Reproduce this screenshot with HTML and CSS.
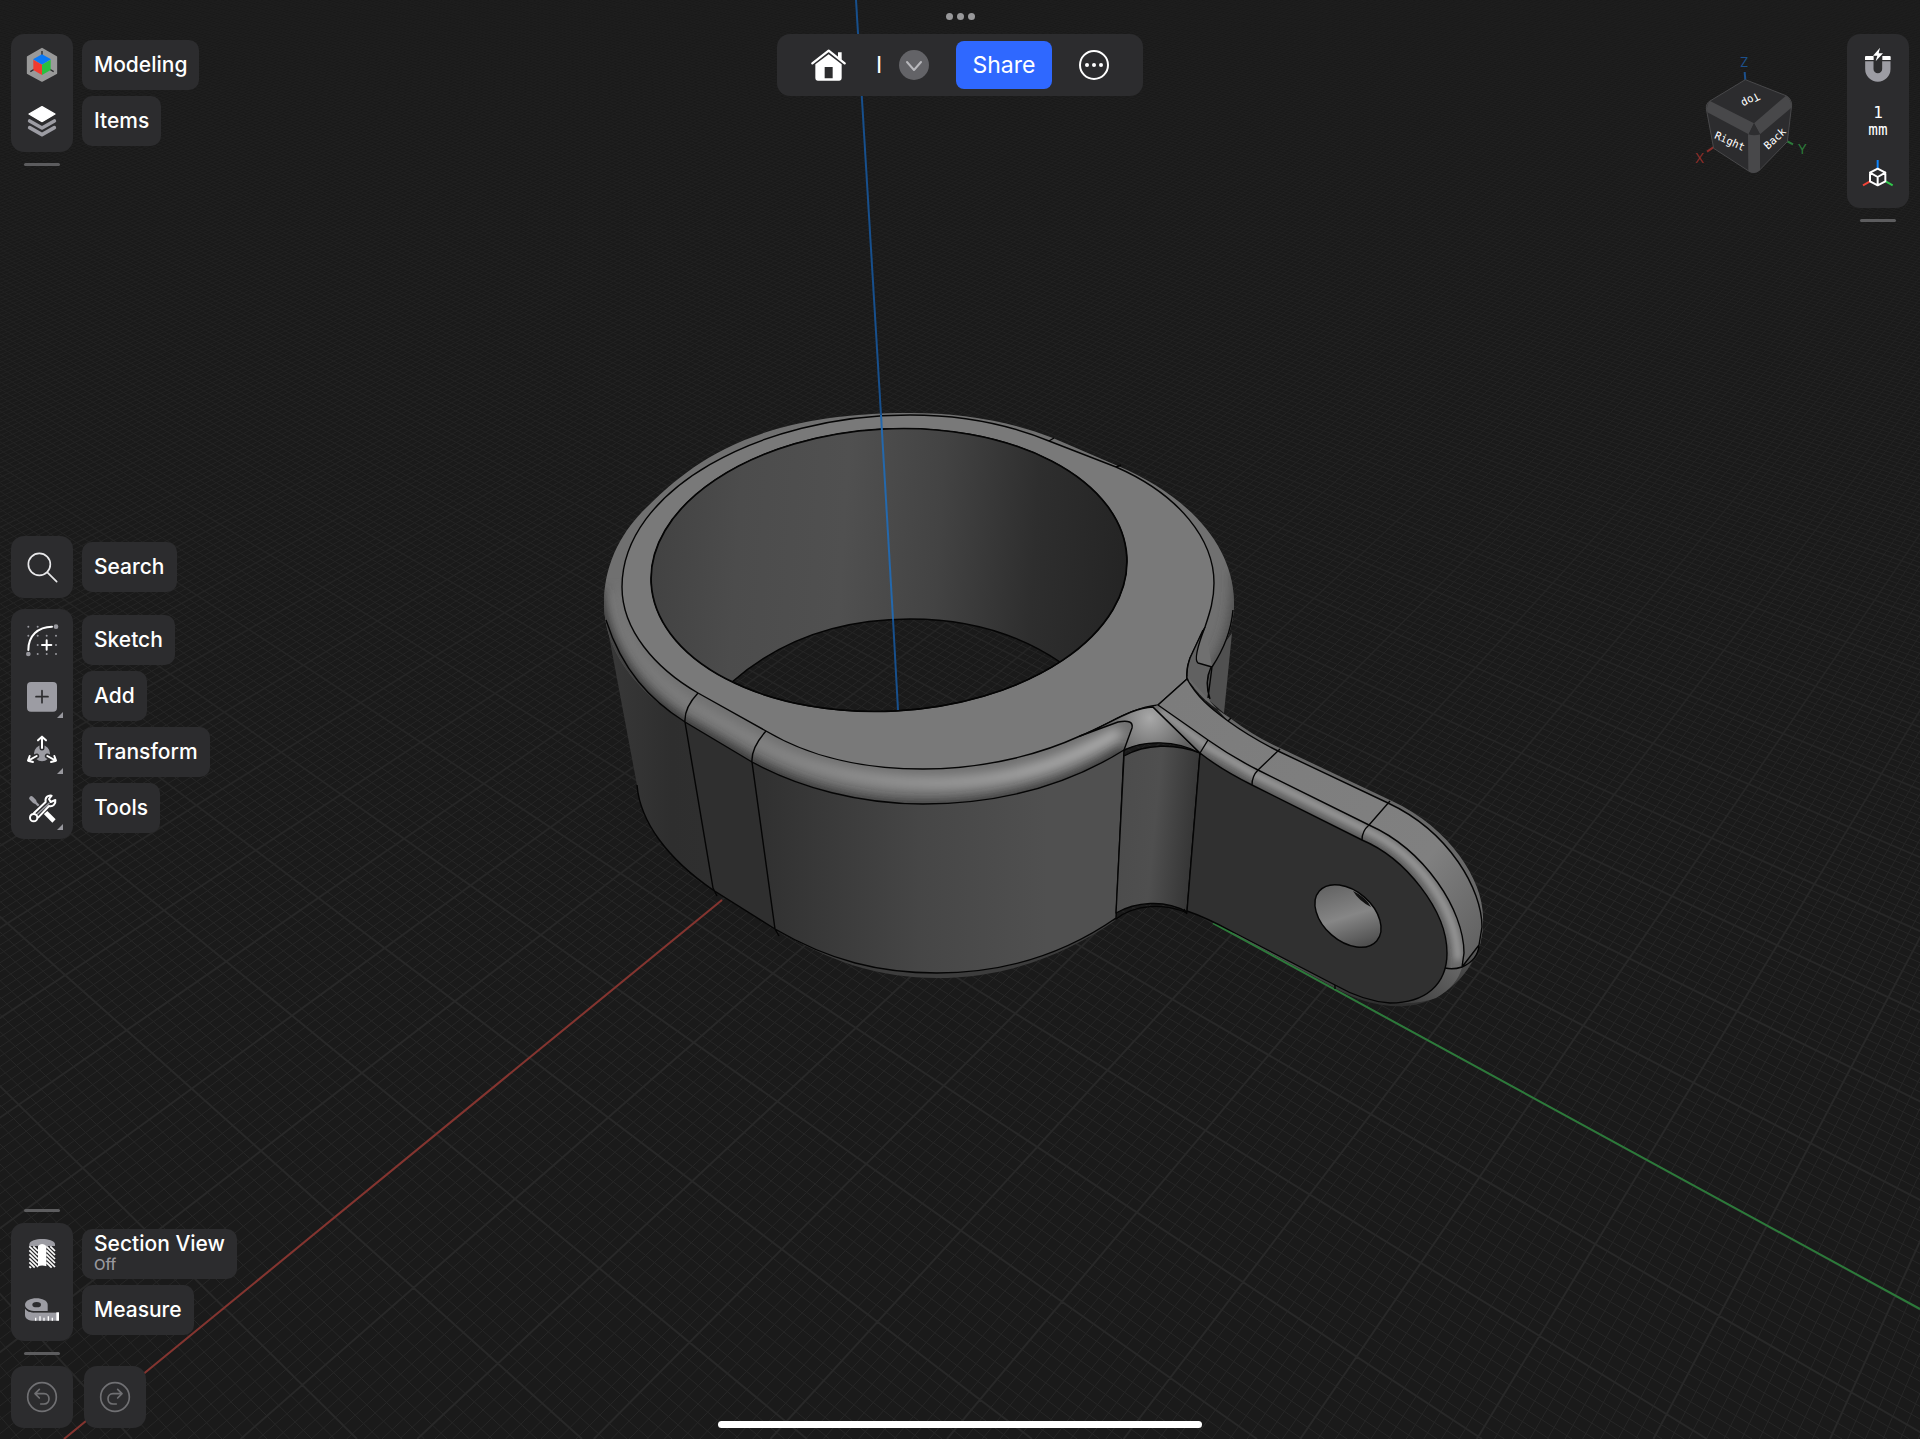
FILE: index.html
```html
<!DOCTYPE html>
<html lang="en">
<head>
  <meta charset="UTF-8" />
  <meta name="viewport" content="width=device-width, initial-scale=1.0" />
  <title>Modeling</title>
  <link rel="stylesheet" href="styles.css">
</head>
<body>
  <div class="app">

    <!-- 3D viewport -->
    <svg class="scene" viewBox="0 0 1920 1439" preserveAspectRatio="xMidYMid slice" aria-hidden="true">
      <defs>
        <linearGradient id="wallIn" x1="650" x2="1128" y1="560" y2="590" gradientUnits="userSpaceOnUse">
          <stop offset="0" stop-color="#424242"/><stop offset=".18" stop-color="#4c4c4c"/><stop offset=".4" stop-color="#505050"/>
          <stop offset=".6" stop-color="#434343"/><stop offset=".8" stop-color="#2e2e2e"/><stop offset="1" stop-color="#242424"/>
        </linearGradient>
        <linearGradient id="wallOut" x1="610" x2="1124" y1="0" y2="0" gradientUnits="userSpaceOnUse">
          <stop offset="0" stop-color="#383838"/><stop offset=".12" stop-color="#2e2e2e"/><stop offset=".3" stop-color="#313131"/>
          <stop offset=".6" stop-color="#464646"/><stop offset=".85" stop-color="#505050"/><stop offset="1" stop-color="#505050"/>
        </linearGradient>
        <linearGradient id="concave" x1="1118" x2="1200" y1="820" y2="828" gradientUnits="userSpaceOnUse">
          <stop offset="0" stop-color="#4c4c4c"/><stop offset=".45" stop-color="#4f4f4f"/><stop offset="1" stop-color="#323232"/>
        </linearGradient>
        <linearGradient id="armTop" x1="1170" x2="1483" y1="700" y2="950" gradientUnits="userSpaceOnUse">
          <stop offset="0" stop-color="#7c7c7c"/><stop offset=".75" stop-color="#808080"/><stop offset="1" stop-color="#606060"/>
        </linearGradient>
        <linearGradient id="armBack" x1="0" x2="0" y1="930" y2="1005" gradientUnits="userSpaceOnUse">
          <stop offset="0" stop-color="#686868"/><stop offset="1" stop-color="#2e2e2e"/>
        </linearGradient>
        <linearGradient id="armLip" x1="1450" x2="1390" y1="950" y2="1010" gradientUnits="userSpaceOnUse">
          <stop offset="0" stop-color="#6a6a6a"/><stop offset="1" stop-color="#343434"/>
        </linearGradient>
        <linearGradient id="bore" x1="1315" x2="1380" y1="890" y2="930" gradientUnits="userSpaceOnUse">
          <stop offset="0" stop-color="#5c5c5c"/><stop offset=".55" stop-color="#868686"/><stop offset="1" stop-color="#4c4c4c"/>
        </linearGradient>
        <linearGradient id="shine" x1="640" x2="1100" y1="0" y2="0" gradientUnits="userSpaceOnUse">
          <stop offset="0" stop-color="#7c7c7c"/><stop offset=".3" stop-color="#8a8a8a"/><stop offset="1" stop-color="#bcbcbc"/>
        </linearGradient>
        <radialGradient id="blend" cx="1150" cy="718" r="45" gradientUnits="userSpaceOnUse">
          <stop offset="0" stop-color="#a8a8a8"/><stop offset="1" stop-color="#606060"/>
        </radialGradient>
        <filter id="soft" x="-20%" y="-20%" width="140%" height="140%"><feGaussianBlur stdDeviation="6"/></filter>
        <filter id="softer" x="-20%" y="-40%" width="140%" height="180%"><feGaussianBlur stdDeviation="3"/></filter>
        <linearGradient id="fadeMajor" x1="0" x2="0" y1="350" y2="1000" gradientUnits="userSpaceOnUse">
          <stop offset="0" stop-color="#fff" stop-opacity="0"/><stop offset="1" stop-color="#fff"/>
        </linearGradient>
        <linearGradient id="fadeMinor" x1="0" x2="0" y1="0" y2="900" gradientUnits="userSpaceOnUse">
          <stop offset="0" stop-color="#fff" stop-opacity=".3"/><stop offset=".5" stop-color="#fff" stop-opacity=".7"/><stop offset="1" stop-color="#fff"/>
        </linearGradient>
        <mask id="majorMask" maskUnits="userSpaceOnUse" x="0" y="0" width="1920" height="1439"><rect width="1920" height="1439" fill="url(#fadeMajor)"/></mask>
        <mask id="minorMask" maskUnits="userSpaceOnUse" x="0" y="0" width="1920" height="1439"><rect width="1920" height="1439" fill="url(#fadeMinor)"/></mask>
        <clipPath id="holeClip"><ellipse cx="889" cy="570" rx="238" ry="141" transform="rotate(-3.2 889 570)"/></clipPath>
        <clipPath id="bandClip"><path d="M604 603C604 560 625 528 647 507C690 465 750 413 910 413C960 413 1010 421 1053 438C1080 450 1100 459 1118 466C1180 492 1234 540 1234 603C1234 630 1222 652 1212 667L1205 627C1212 610 1214 600 1214 583C1213 540 1180 498 1116 467L1049 441C1010 425 965 415 910 415C760 415 622 490 622 587C622 630 655 668 698 693L766 731C810 757 860 769 923 769C990 769 1045 752 1080 736L1118 722Q1134 719 1132 728L1124 750C1090 772 1020 804 923 804C860 804 800 788 752 762L685 722C650 700 604 660 604 603Z"/></clipPath>
        <clipPath id="armClip"><path d="M1153 707L1158 705L1208 740C1225 752 1240 761 1258 770L1369 825C1425 850 1464 910 1464 953L1462 967C1455 969 1449 969 1445 968L1447 953C1445 910 1405 858 1362 840L1252 785C1232 775 1215 765 1200 753Z"/></clipPath>
      </defs>

      <g mask="url(#minorMask)"><path class="grid-minor" id="gridMinor"/></g>
      <g mask="url(#majorMask)"><path class="grid-major" id="gridMajor"/></g>
      <path class="axis-x" d="M722 900L64 1439"/>
      <path class="axis-y" d="M1213 923L1920 1309"/>

      <!-- ring walls -->
      <path fill="#505050" d="M1232 633L1224 713L1205 697L1212 660Z"/>
      <path fill="#3c3c3c" d="M775 929C830 962 880 978 937 978C1010 978 1070 952 1116 920L1070 930L937 960Z"/>
      <path fill="url(#wallOut)" d="M606 620L637 785C640 822 668 859 713 890L775 929C830 961 880 973 937 973C1010 973 1070 950 1116 918L1124 750C1060 790 990 804 923 804C860 804 800 788 752 762L685 722C650 700 622 670 606 620"/>
      <path fill="#2f2f2f" d="M685 722L752 762L775 929L713 890Z"/>
      <path class="edge" d="M637 785C640 822 668 859 713 890L775 929C830 961 880 973 937 973C1010 973 1070 950 1116 918M685 722L713 888L717 896M752 762L775 929L779 936M1124 750L1116 918"/>

      <!-- top rounding -->
      <path fill="#707070" fill-rule="evenodd" d="M604 603C604 560 625 528 647 507C690 465 750 413 910 413C960 413 1010 421 1053 438L1118 466C1180 492 1234 540 1234 603C1234 630 1222 652 1212 667L1187 679L1124 750C1090 772 1020 804 923 804C860 804 800 788 752 762L685 722C650 700 604 660 604 603ZM1127 557A238 141 -3.2 0 0 651 583A238 141 -3.2 0 0 1127 557Z"/>
      <g clip-path="url(#bandClip)">
        <path class="shade-dark" d="M600 590C606 665 650 702 685 724L752 764C800 790 860 808 923 808C1020 808 1090 776 1126 750"/>
        <path class="shade-light" d="M612 590C616 640 655 680 692 706L760 743C810 772 880 784 940 783C1020 781 1070 760 1120 732"/>
        <path class="shade-right" d="M1238 570C1240 620 1228 650 1208 680"/>
      </g>

      <!-- top face -->
      <path class="edge" fill="#797979" fill-rule="evenodd" d="M622 587C622 490 760 415 910 415C965 415 1010 425 1049 441L1116 467C1180 495 1214 540 1214 583C1214 600 1210 612 1205 627L1190 658Q1186 668 1187 679L1158 705C1130 708 1110 724 1080 736C1045 752 990 769 923 769C860 769 810 757 766 731L698 693C655 668 622 630 622 587ZM1127 557A238 141 -3.2 0 0 651 583A238 141 -3.2 0 0 1127 557Z"/>
      <g clip-path="url(#holeClip)">
        <path class="edge" fill="url(#wallIn)" d="M732 682C780 640 840 619 910 619C970 619 1020 635 1060 662L1160 662V400H640V682Z"/>
      </g>
      <ellipse class="edge" cx="889" cy="570" rx="238" ry="141" transform="rotate(-3.2 889 570)"/>
      <path class="edge" d="M606 620C622 670 650 700 685 722L752 762C800 788 860 804 923 804C990 804 1060 790 1124 750M698 693Q684 708 685 722M766 731Q751 748 752 762M1049 441L1054 438M1116 467L1121 465"/>

      <!-- blend next to the arm, right side -->
      <path fill="#616161" d="M1203 630L1190 658Q1186 670 1189 682L1210 702L1207 680L1211 667L1198 664Q1194 658 1203 630Z"/>
      <path class="edge" d="M1205 627C1198 645 1194 660 1198 663L1212 667C1222 652 1231 632 1233 610M1203 630L1190 658Q1186 670 1187 679M1211 667Q1204 682 1210 699M1212 667L1208 698"/>

      <!-- concave wall and blend -->
      <path fill="url(#concave)" class="edge" d="M1124 756C1145 744 1175 743 1200 753L1187 912C1165 899 1135 902 1116 913Z"/>
      <path class="edge" d="M1116 919C1135 904 1165 903 1187 913"/>
      <path fill="url(#blend)" class="edge" d="M1080 736C1110 724 1130 708 1153 707L1200 753C1175 740 1145 740 1124 750L1132 728Q1134 719 1118 722Z"/>

      <!-- arm -->
      <path fill="url(#armBack)" d="M1187 676C1196 695 1212 706 1230 718Q1255 737 1280 748L1392 801C1450 828 1483 880 1483 917Q1484 943 1473 960C1460 986 1432 1005 1405 1006Q1370 1008 1335 988L1233 933L1445 960Z"/>
      <path fill="url(#armTop)" d="M1187 679C1197 697 1210 708 1228 721Q1250 737 1278 751L1388 803C1450 832 1482 890 1482 927L1480 945L1462 967L1464 953C1464 910 1425 850 1369 825L1258 770C1240 761 1225 752 1208 740L1158 705Z"/>
      <g clip-path="url(#armClip)">
        <path fill="#6a6a6a" d="M1150 690H1490V1000H1150Z"/>
        <path class="arm-light" d="M1160 710L1208 747L1258 776L1366 830C1422 856 1458 912 1458 960"/>
        <path class="arm-dark" d="M1198 758L1252 789L1362 844C1403 862 1443 910 1444 970"/>
      </g>
      <path fill="url(#armLip)" d="M1445 968Q1453 970 1462 967Q1458 985 1436 998Q1400 1012 1335 988L1363 997Q1430 1014 1445 968Z"/>
      <path fill="#303030" class="edge" d="M1200 753C1215 765 1232 775 1252 785L1362 840C1405 858 1447 910 1447 953C1447 985 1425 1003 1390 1003Q1363 1001 1335 985L1233 932Q1205 917 1187 911Z"/>
      <path class="edge" d="M1187 679L1158 705L1208 740C1225 752 1240 761 1258 770L1369 825C1425 850 1464 910 1464 953L1462 967L1479 945M1187 679C1197 697 1210 708 1228 721Q1250 737 1278 751L1388 803C1450 832 1482 890 1482 927L1479 945Q1478 960 1462 967Q1453 970 1445 968M1280 749L1258 770Q1252 776 1252 785M1390 801L1369 825Q1362 831 1362 840M1208 740L1200 753L1153 707M1228 721L1231 718M1184 909L1187 914M1335 985V989"/>
      <ellipse class="edge" fill="url(#bore)" cx="1348" cy="916" rx="38" ry="25" transform="rotate(41 1348 916)"/>
      <path fill="#111" d="M1353 891Q1366 897 1371 907Q1359 901 1353 891Z"/>

      <path class="axis-z" d="M856 0L881 415"/>
      <path class="axis-z axis-z-over" d="M881 415L893 619"/>
      <path class="axis-z" d="M893 619L898 710"/>
    </svg>

    <main class="ui">
      <aside class="side side-left">
        <div class="stack">
          <section class="group">
            <div class="panel">
              <button class="tool" aria-labelledby="l-modeling">
                <svg viewBox="0 0 108 108"><path fill="#999" stroke="#999" stroke-width="5" stroke-linejoin="round" d="M54 5L97 30V79L54 102L11 79V30Z"/><path stroke="#2c2c2e" stroke-width="4" d="M54 12V26M19 74L32 66M89 74L76 66"/><path fill="#0a78f5" d="M54 22L81 37L54 53L27 37Z"/><path fill="#f03b30" d="M28 38L54 53V84L28 69Z"/><path fill="#28c03f" d="M80 38L54 53V84L80 69Z"/></svg>
              </button>
              <button class="tool" aria-labelledby="l-items">
                <svg viewBox="0 0 108 108"><path fill="#fff" stroke="#fff" stroke-width="4" stroke-linejoin="round" d="M54 11L93 33L54 56L15 33Z"/><path class="layer" d="M17 54L54 75L91 54M17 74L54 95L91 74"/><path fill="none" stroke="#2c2c2e" stroke-width="4" d="M10 38L54 62L98 38"/></svg>
              </button>
            </div>
            <div class="labels">
              <span class="label" id="l-modeling">Modeling</span>
              <span class="label" id="l-items">Items</span>
            </div>
          </section>
          <div class="handle"></div>
        </div>

        <div class="stack">
          <section class="group">
            <div class="panel">
              <button class="tool" aria-labelledby="l-search">
                <svg class="line" viewBox="0 0 108 108"><circle cx="46" cy="46" r="33"/><path d="M70 70L98 98"/></svg>
              </button>
            </div>
            <div class="labels"><span class="label" id="l-search">Search</span></div>
          </section>
          <section class="group">
            <div class="panel">
              <button class="tool" aria-labelledby="l-sketch">
                <svg viewBox="0 0 108 108"><g fill="#98989e"><circle cx="96" cy="14" r="7"/><circle cx="13" cy="96" r="7"/><circle cx="13" cy="14" r="3"/><circle cx="41" cy="14" r="3"/><circle cx="13" cy="41" r="3"/><circle cx="41" cy="41" r="3"/><circle cx="68" cy="41" r="3"/><circle cx="96" cy="41" r="3"/><circle cx="41" cy="69" r="3"/><circle cx="96" cy="69" r="3"/><circle cx="41" cy="96" r="3"/><circle cx="68" cy="96" r="3"/><circle cx="96" cy="96" r="3"/></g><path class="white-line" d="M13 84C13 42 42 14 84 14M68 55V83M54 69H82"/></svg>
              </button>
              <button class="tool has-menu" aria-labelledby="l-add">
                <svg viewBox="0 0 108 108"><rect x="9" y="12" width="90" height="89" rx="12" fill="#9c9ca3"/><path stroke="#2c2c2e" stroke-width="5" stroke-linecap="round" d="M54 38V74M36 56H72"/></svg>
              </button>
              <button class="tool has-menu" aria-labelledby="l-transform">
                <svg viewBox="0 0 108 108"><circle cx="54" cy="58" r="24" fill="#9c9ca3"/><path class="cut" d="M54 42V12M38 66L14 79M70 66L94 79"/><path class="white-line" d="M54 42V9M42 19L54 8L66 19M38 66L13 80M17 66L12 80L27 84M70 66L95 80M91 66L96 80L81 84"/></svg>
              </button>
              <button class="tool has-menu" aria-labelledby="l-tools">
                <svg viewBox="0 0 108 108"><path stroke="#9c9ca3" stroke-width="13" stroke-linecap="round" d="M22 25L31 34"/><path stroke="#9c9ca3" stroke-width="7" d="M31 34L48 51"/><path stroke="#fff" stroke-width="14" d="M62 65L90 93"/><path stroke="#2c2c2e" stroke-width="29" d="M36 74L76 38"/><path stroke="#9c9ca3" stroke-width="5" d="M37 75L76 39"/><path class="white-line" d="M30 69L65 36C62 22 72 15 83 17L75 27L80 36L94 30C96 42 87 51 75 48L43 82"/><circle class="white-line" cx="29" cy="83" r="11"/></svg>
              </button>
            </div>
            <div class="labels">
              <span class="label" id="l-sketch">Sketch</span>
              <span class="label" id="l-add">Add</span>
              <span class="label" id="l-transform">Transform</span>
              <span class="label" id="l-tools">Tools</span>
            </div>
          </section>
        </div>

        <div class="stack">
          <div class="handle"></div>
          <section class="group">
            <div class="panel">
              <button class="tool" aria-labelledby="l-section">
                <svg viewBox="0 0 108 108"><path fill="#9c9ca3" d="M16 33V24C20 4 89 4 93 24V33Z"/><path fill="#2c2c2e" d="M16 30H93V97H16Z"/><path class="hatch" d="M16 31L42 57M16 43L42 69M16 55L42 81M16 67L42 93M16 79L32 95M16 91L21 96M28 31L42 45M67 31L93 57M67 43L93 69M67 55L93 81M67 67L93 93M67 79L83 95M79 31L93 45"/><path fill="#fff" d="M42 30Q54 18 67 30V91Q54 86 42 91Z"/></svg>
              </button>
              <button class="tool" aria-labelledby="l-measure">
                <svg viewBox="0 0 108 108"><path fill="#9c9ca3" d="M3 38C3 12 71 12 71 38V57H36C18 57 3 50 3 38Z"/><path fill="#9c9ca3" d="M3 50C10 60 22 62 36 61H105V86H30C14 86 3 80 3 68Z"/><path fill="none" stroke="#2c2c2e" stroke-width="3" d="M3 47C10 58 22 60 36 60H105"/><ellipse cx="38" cy="38" rx="13" ry="8" fill="#2c2c2e"/><path stroke="#fff" stroke-width="4" d="M35 77V86M48 73V86M60 77V86M73 73V86M85 77V86"/><path fill="#fff" d="M97 61H105V86H97Z"/></svg>
              </button>
            </div>
            <div class="labels">
              <span class="label label-two" id="l-section">Section View<small>Off</small></span>
              <span class="label" id="l-measure">Measure</span>
            </div>
          </section>
          <div class="handle"></div>
          <div class="history">
            <button class="panel" aria-label="Undo" disabled>
              <svg class="muted" viewBox="0 0 108 108"><circle cx="54" cy="54" r="43"/><path d="M46 31L33 44L46 57M34 44H60C80 44 80 75 60 75H50"/></svg>
            </button>
            <button class="panel" aria-label="Redo" disabled>
              <svg class="muted" viewBox="0 0 108 108"><circle cx="54" cy="54" r="43"/><path d="M62 31L75 44L62 57M74 44H48C28 44 28 75 48 75H58"/></svg>
            </button>
          </div>
        </div>
      </aside>

      <div class="center">
        <header>
          <div class="dots"><i></i><i></i><i></i></div>
          <nav class="topbar">
            <button class="home" aria-label="Home">
              <svg viewBox="0 0 105 96"><path fill="none" stroke="#fff" stroke-width="7" stroke-linecap="round" stroke-linejoin="round" d="M4 43L53 5L101 43"/><path fill="#fff" d="M81 10H92V33L81 24Z"/><path fill="#fff" fill-rule="evenodd" d="M13 46L53 16L92 46V88Q92 95 85 95H20Q13 95 13 88ZM41 54V88H65V54Z"/></svg>
            </button>
            <div class="file">
              <span class="file-name">I</span>
              <button class="chevron" aria-label="File menu"><svg viewBox="0 0 30 30"><path d="M8 12L15 20L22 12"/></svg></button>
            </div>
            <button class="share">Share</button>
            <button class="more" aria-label="More">
              <svg viewBox="0 0 30 30"><circle cx="15" cy="15" r="14" fill="none" stroke="#fff" stroke-width="2"/><circle cx="8" cy="15" r="2" fill="#fff"/><circle cx="15" cy="15" r="2" fill="#fff"/><circle cx="22" cy="15" r="2" fill="#fff"/></svg>
            </button>
          </nav>
        </header>
        <div class="home-indicator"></div>
      </div>

      <aside class="side side-right">
        <button class="view-cube" aria-label="View cube">
          <svg viewBox="30 100 360 372">
            <path stroke="#1c508c" stroke-width="6" d="M194 157L196 182"/><path stroke="#8c2e2a" stroke-width="6" d="M100 383L81 396"/><path stroke="#2c7a3a" stroke-width="6" d="M320 364L339 374"/>
            <path fill="#2c2c2e" stroke="#48484a" stroke-width="3" stroke-linejoin="round" d="M196 180L318 228Q334 236 335 256L322 366L238 452Q222 464 206 454L101 386L79 268Q78 250 90 244Z"/>
            <path fill="#48484a" d="M90 244L222 311L206 344L82 278Q78 254 90 244ZM318 228L222 311L240 344L334 264Q335 238 318 228ZM204 344H240V452Q222 466 205 454Z"/>
            <path fill="#2e2e30" d="M222 311L206 344Q222 350 240 344Z"/>
            <g class="cube-text">
              <text transform="translate(232 218) rotate(152)">Top</text>
              <text transform="translate(101 355) rotate(24)">Right</text>
              <text transform="translate(264 391) rotate(-43)">Back</text>
            </g>
            <g class="axis-text"><text x="180" y="143" fill="#1c508c">Z</text><text x="45" y="430" fill="#8c2e2a">X</text><text x="353" y="402" fill="#2c7a3a">Y</text></g>
          </svg>
        </button>
        <div class="stack">
          <div class="panel">
            <button class="tool" aria-label="Snapping">
              <svg viewBox="0 0 108 108"><path fill="none" stroke="#9c9ca3" stroke-width="25" d="M28 43V66A25 25 0 0 0 79 66V43"/><path fill="#fff" d="M15 39V30Q15 27 18 27H41V39ZM67 39V27H89Q92 27 92 30V39Z"/><path fill="#fff" stroke="#2c2c2e" stroke-width="3" paint-order="stroke" d="M60 2L39 26H52L47 43L69 19H56Z"/></svg>
            </button>
            <button class="tool units">1<br>mm</button>
            <button class="tool" aria-label="Orientation">
              <svg viewBox="0 0 108 108"><path stroke="#0a84ff" stroke-width="6" d="M53 3V27"/><path stroke="#f04438" stroke-width="6" d="M30 67L9 79"/><path stroke="#30c84b" stroke-width="6" d="M77 67L98 79"/><path class="white-line" d="M53 29L76 41V67L53 79L30 67V41ZM30 41L53 54L76 41M53 54V79"/></svg>
            </button>
          </div>
          <div class="handle"></div>
        </div>
      </aside>
    </main>
  </div>

  <script>
    // ground grid: each family of lines meets in its own vanishing point
    const base = 1439;
    const families = [
      { vx: 2882, vy: -871, start: 64, step: 17.66, from: -280, to: 110 },
      { vx: -1869, vy: -761, start: 2157, step: 22.5, from: -96, to: 310 }
    ];
    let minor = "";
    let major = "";

    families.forEach((f) => {
      for (let i = f.from; i <= f.to; i++) {
        const x = f.start + i * f.step;
        const t = base / (base - f.vy);
        const topX = x + (f.vx - x) * t;
        const line = `M${x.toFixed(1)} ${base}L${topX.toFixed(1)} 0`;
        minor += line;
        if (i % 10 === 0) {
          major += line;
        }
      }
    });

    document.getElementById("gridMinor").setAttribute("d", minor);
    document.getElementById("gridMajor").setAttribute("d", major);
  </script>
</body>
</html>
```
FILE: styles.css
```css
* {
  box-sizing: border-box;
}
body {
  margin: 0;
  background: #1a1a1a;
  color: #fff;
  font-family: Inter, "Liberation Sans", sans-serif;
}
button {
  margin: 0;
  padding: 0;
  border: 0;
  background: none;
  color: inherit;
  font: inherit;
  cursor: pointer;
}
svg {
  display: block;
}
.app {
  display: grid;
  height: 100vh;
  overflow: hidden;
}
.scene, .ui {
  grid-area: 1 / 1;
  width: 100%;
  height: 100%;
  min-height: 0;
}
.ui {
  display: grid;
  grid-template-columns: 1fr auto 1fr;
  z-index: 1;
}

/* viewport */
.grid-minor, .grid-major {
  fill: none;
  stroke: #272727;
  stroke-width: 1;
}
.grid-major {
  stroke: #282828;
  stroke-width: 2;
}
.axis-x, .axis-y, .axis-z {
  fill: none;
  stroke: #85342f;
  stroke-width: 2;
}
.axis-y {
  stroke: #2c7a3a;
}
.axis-z {
  stroke: #174f8c;
}
.axis-z-over {
  stroke: #2468ac;
}
.edge {
  stroke: #050505;
  stroke-width: 1.4;
  stroke-linejoin: round;
}
.edge:not([fill]) {
  fill: none;
}
.shade-dark, .shade-light, .shade-right, .arm-light, .arm-dark {
  fill: none;
  stroke: #2e2e2e;
  stroke-width: 12;
  filter: url(#soft);
}
.shade-light {
  stroke: url(#shine);
  stroke-width: 10;
}
.shade-right {
  stroke: #484848;
}
.arm-light {
  stroke: #a2a2a2;
  stroke-width: 6;
  filter: url(#softer);
}
.arm-dark {
  stroke: #3a3a3a;
  stroke-width: 6;
  filter: url(#softer);
}

/* side toolbars */
.side {
  display: flex;
  padding: 34px 11px 11px;
}
.side-left {
  flex-direction: column;
  justify-content: space-between;
}
.side-right {
  justify-content: flex-end;
  align-items: flex-start;
  gap: 37px;
}
.stack {
  display: flex;
  flex-direction: column;
  gap: 11px;
}
.group {
  display: flex;
  gap: 9px;
}
.panel {
  padding: 3px;
  border-radius: 13px;
  background: #2c2c2e;
}
.tool {
  position: relative;
  display: flex;
  align-items: center;
  justify-content: center;
  width: 56px;
  height: 56px;
}
.tool svg, .history svg {
  width: 36px;
  height: 36px;
}
.has-menu::after {
  content: "";
  position: absolute;
  right: 7px;
  bottom: 6px;
  border-left: 6px solid transparent;
  border-bottom: 6px solid #98989e;
}
.labels {
  display: flex;
  flex-direction: column;
  align-items: flex-start;
  gap: 6px;
  padding: 6px 0;
}
.label {
  display: flex;
  flex-direction: column;
  justify-content: center;
  height: 50px;
  padding: 0 12px;
  border-radius: 10px;
  background: #2c2c2e;
  font-size: 21px;
  font-weight: 500;
  line-height: 24px;
}
.label-two {
  line-height: 22px;
}
.label small {
  color: #98989e;
  font-size: 15px;
  font-weight: 500;
  line-height: 20px;
}
.handle {
  align-self: flex-start;
  width: 36px;
  height: 3px;
  margin-left: 13px;
  border-radius: 2px;
  background: #5c5c5e;
}
.history {
  display: flex;
  gap: 11px;
}
.history .panel {
  display: flex;
  align-items: center;
  justify-content: center;
  width: 62px;
  height: 62px;
}
.units {
  font-family: "DejaVu Sans Mono", "Liberation Mono", monospace;
  font-size: 16px;
  line-height: 17px;
}

/* icon strokes */
.line, .muted, .white-line, .layer, .cut, .hatch {
  fill: none;
  stroke: #e8e8ea;
  stroke-width: 5;
  stroke-linecap: round;
  stroke-linejoin: round;
}
.muted {
  stroke: #707073;
}
.white-line {
  stroke: #fff;
  stroke-width: 6;
}
.layer {
  stroke: #9c9ca3;
  stroke-width: 11;
}
.cut {
  stroke: #2c2c2e;
  stroke-width: 15;
}
.hatch {
  stroke: #fff;
  stroke-linecap: butt;
}

/* top bar */
.center {
  display: flex;
  flex-direction: column;
  align-items: center;
  justify-content: space-between;
  padding: 13px 0 11px;
}
.dots {
  display: flex;
  justify-content: center;
  gap: 4px;
  height: 21px;
}
.dots i {
  width: 7px;
  height: 7px;
  border-radius: 50%;
  background: #98989a;
}
.topbar {
  display: flex;
  align-items: center;
  gap: 27px;
  padding: 7px 34px;
  border-radius: 13px;
  background: #2c2c2e;
}
.home {
  width: 35px;
}
.file {
  display: flex;
  align-items: center;
  gap: 14px;
}
.file-name {
  width: 12px;
  font-size: 23px;
  text-align: center;
}
.chevron, .more {
  width: 30px;
  height: 30px;
}
.chevron {
  border-radius: 50%;
  background: #636367;
}
.chevron path {
  fill: none;
  stroke: #b8b8bc;
  stroke-width: 2;
  stroke-linecap: round;
  stroke-linejoin: round;
}
.share {
  width: 96px;
  height: 48px;
  border-radius: 8px;
  background: #2f68ff;
  font-size: 23px;
}
.home-indicator {
  width: 484px;
  height: 7px;
  border-radius: 4px;
  background: #fff;
}

/* view cube */
.view-cube {
  width: 120px;
  margin-top: 19px;
}
.cube-text, .axis-text {
  fill: #fff;
  font-family: "DejaVu Sans Mono", "Liberation Mono", monospace;
  font-size: 32px;
}
.axis-text {
  font-family: Inter, sans-serif;
  font-size: 40px;
}
```
